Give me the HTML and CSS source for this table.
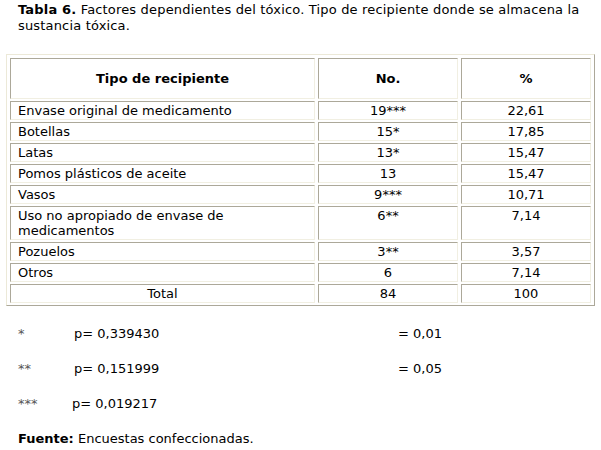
FILE: index.html
```html
<!DOCTYPE html>
<html lang="es">
<head>
<meta charset="utf-8">
<link rel="stylesheet" href="styles.css">
</head>
<body>
<p class="caption"><b>Tabla 6.</b> Factores dependientes del tóxico. Tipo de recipiente donde se almacena la sustancia tóxica.</p>
<table class="data">
  <colgroup><col class="c1"><col class="c2"><col class="c3"></colgroup>
  <thead>
    <tr><th>Tipo de recipiente</th><th>No.</th><th>%</th></tr>
  </thead>
  <tbody>
    <tr><td>Envase original de medicamento</td><td class="num">19***</td><td class="num">22,61</td></tr>
    <tr><td>Botellas</td><td class="num">15*</td><td class="num">17,85</td></tr>
    <tr><td>Latas</td><td class="num">13*</td><td class="num">15,47</td></tr>
    <tr><td>Pomos plásticos de aceite</td><td class="num">13</td><td class="num">15,47</td></tr>
    <tr><td>Vasos</td><td class="num">9***</td><td class="num">10,71</td></tr>
    <tr><td>Uso no apropiado de envase de medicamentos</td><td class="num">6**</td><td class="num">7,14</td></tr>
    <tr><td>Pozuelos</td><td class="num">3**</td><td class="num">3,57</td></tr>
    <tr><td>Otros</td><td class="num">6</td><td class="num">7,14</td></tr>
    <tr><td class="num">Total</td><td class="num">84</td><td class="num">100</td></tr>
  </tbody>
</table>
<div class="notes">
  <div class="note"><span class="mark">*</span><span class="pval">p= 0,339430</span><span class="eq">= 0,01</span></div>
  <div class="note"><span class="mark">**</span><span class="pval">p= 0,151999</span><span class="eq">= 0,05</span></div>
  <div class="note"><span class="mark mark-wide">***</span><span class="pval">p= 0,019217</span></div>
  <p class="source"><b>Fuente:</b> Encuestas confeccionadas.</p>
</div>
</body>
</html>
```
FILE: styles.css
```css
html, body {
  margin: 0;
  padding: 0;
  background: #fff;
}
body {
  font-family: "DejaVu Sans", Verdana, sans-serif;
  font-size: 13px;
  line-height: 16px;
  color: #000;
}
.caption {
  margin: 0;
  padding: 2px 12px 0 18px;
  letter-spacing: 0.17px;
}
.data {
  margin: 20px 0 0 6px;
  width: 588px;
  table-layout: fixed;
  border-collapse: separate;
  border-spacing: 3px 2px;
  padding: 1px 0 0 0;
  border: 1px solid;
  border-color: #ece9d8 #aca899 #aca899 #ece9d8;
}
.c1 { width: 305px; }
.c2 { width: 140px; }
.c3 { width: 130px; }
.data th, .data td {
  border: 1px solid;
  border-color: #aca899 #f1efe2 #f1efe2 #aca899;
  padding: 1px 1px 1px 7px;
  line-height: 15px;
  text-align: left;
  vertical-align: top;
}
.data th {
  height: 37px;
  padding: 1px;
  text-align: center;
  vertical-align: middle;
  font-weight: bold;
}
.data td.num {
  text-align: center;
  padding-left: 1px;
}
.notes {
  padding: 20px 0 0 18px;
}
.note {
  display: flex;
  height: 35px;
  align-items: flex-start;
}
.mark {
  width: 56px;
  color: #555;
}
.mark-wide {
  width: 54px;
}
.pval {
  width: 324px;
}
.source {
  margin: 0;
}
```
